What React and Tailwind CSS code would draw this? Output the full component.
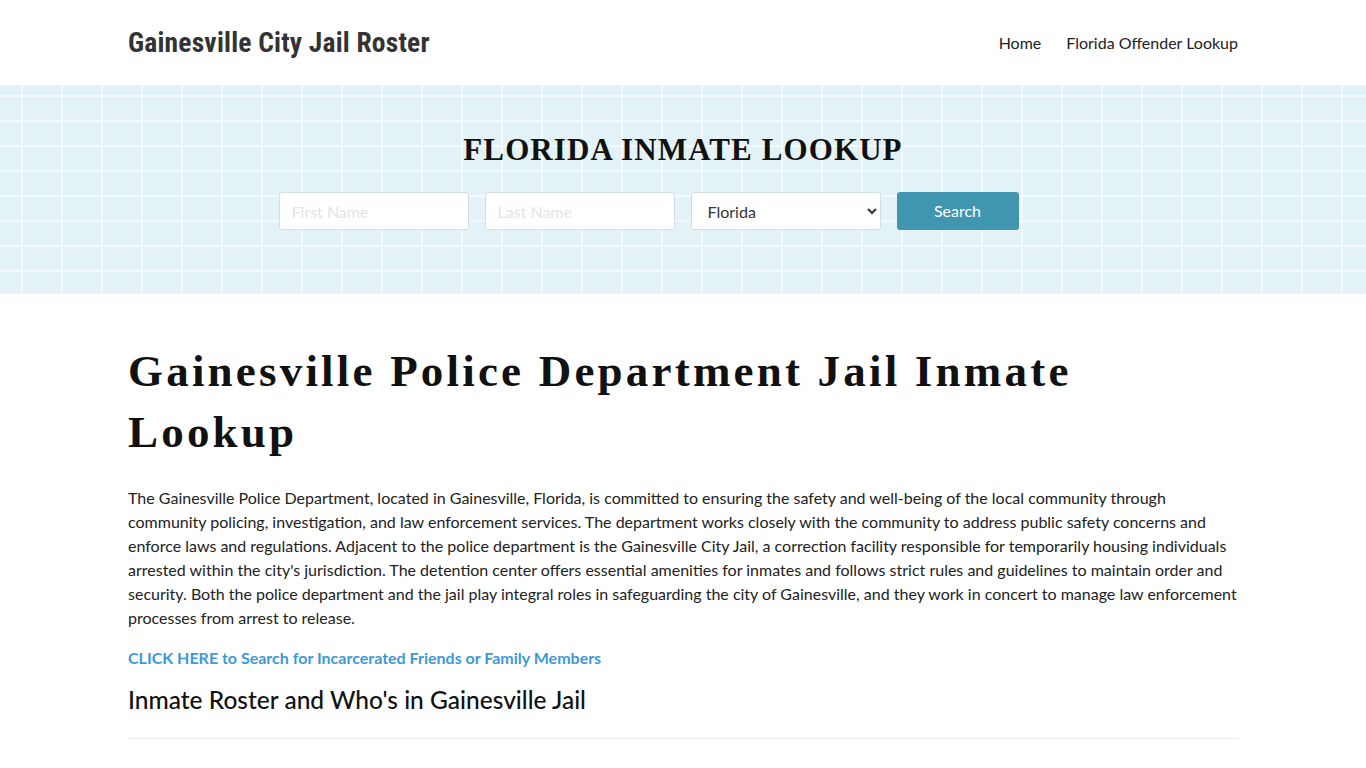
export default function App() {
  return (
    <div className="min-h-screen bg-white font-['Lato','Open_Sans',sans-serif] text-[#222]">
      <header className="h-[85px]">
        <div className="mx-auto flex h-full w-[1110px] items-center justify-between">
          <a className="font-['Liberation_Sans_Narrow','Roboto',sans-serif] text-[27.5px] font-bold tracking-[0.2px] text-[#333] [font-stretch:condensed]">
            Gainesville City Jail Roster
          </a>
          <nav className="flex items-center gap-[25px] text-[16px] text-[#222]">
            <a>Home</a>
            <a>Florida Offender Lookup</a>
          </nav>
        </div>
      </header>

      <section className="h-[209px] bg-[#e3f2f7] bg-[linear-gradient(90deg,rgba(255,255,255,0.55)_2px,transparent_2px),linear-gradient(0deg,rgba(255,255,255,0.55)_2px,transparent_2px)] bg-[size:40px_25px] bg-[position:21px_12px]">
        <div className="flex flex-col items-center pt-[45px]">
          <h2 className="font-['Liberation_Serif','DejaVu_Serif',serif] text-[31px] font-bold leading-[40px] tracking-[1.1px] text-[#111]">
            FLORIDA INMATE LOOKUP
          </h2>
          <form className="mt-[22px] flex items-center gap-[16px] pr-[69px]">
            <input
              placeholder="First Name"
              className="h-[38px] w-[190px] rounded-[3px] border border-[#d6dde0] bg-white px-3 text-[16px] placeholder:text-[#e2e5e7]"
            />
            <input
              placeholder="Last Name"
              className="h-[38px] w-[190px] rounded-[3px] border border-[#d6dde0] bg-white px-3 text-[16px] placeholder:text-[#e2e5e7]"
            />
            <select className="h-[38px] w-[190px] rounded-[3px] border border-[#d6dde0] bg-white px-3 text-[16px] text-[#333]">
              <option>Florida</option>
            </select>
            <button
              type="button"
              className="h-[38px] w-[122px] rounded-[3px] bg-[#3f96ae] text-[16px] text-white"
            >
              Search
            </button>
          </form>
        </div>
      </section>

      <main className="mx-auto w-[1110px] pt-[47px]">
        <h1 className="font-['Liberation_Serif','DejaVu_Serif',serif] text-[45px] font-bold leading-[61px] tracking-[3.2px] text-[#111]">
          Gainesville Police Department Jail Inmate Lookup
        </h1>
        <p className="mt-[23px] text-[16px] leading-[24px] text-[#222]">
          The Gainesville Police Department, located in Gainesville, Florida, is committed to ensuring the safety and well-being of the local community through community policing, investigation, and law enforcement services. The department works closely with the community to address public safety concerns and enforce laws and regulations. Adjacent to the police department is the Gainesville City Jail, a correction facility responsible for temporarily housing individuals arrested within the city's jurisdiction. The detention center offers essential amenities for inmates and follows strict rules and guidelines to maintain order and security. Both the police department and the jail play integral roles in safeguarding the city of Gainesville, and they work in concert to manage law enforcement processes from arrest to release.
        </p>
        <a className="mt-[16px] block text-[16px] font-bold leading-[24px] text-[#3d9ad6]">
          CLICK HERE to Search for Incarcerated Friends or Family Members
        </a>
        <h2 className="mt-[12px] text-[24.5px] font-medium leading-[36px] text-[#111]">
          Inmate Roster and Who's in Gainesville Jail
        </h2>
        <hr className="mt-[20px] border-t border-[#eaeaea]" />
      </main>
    </div>
  );
}
